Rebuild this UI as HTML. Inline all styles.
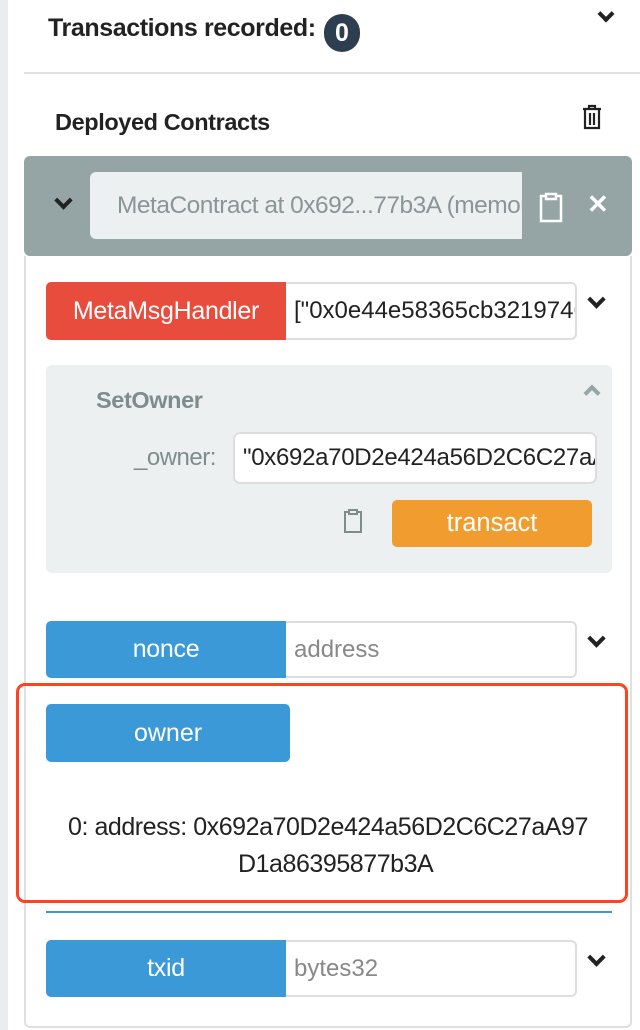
<!DOCTYPE html>
<html><head><meta charset="utf-8"><style>
*{box-sizing:border-box;margin:0;padding:0}
body{width:640px;height:1030px;position:relative;background:#fff;font-family:"Liberation Sans",sans-serif;overflow:hidden;color:#222}
.a{position:absolute}
.btn{position:absolute;color:#fff;font-size:25px;display:flex;align-items:center;justify-content:center;border-radius:5px 0 0 5px;letter-spacing:-0.3px}
.inp{position:absolute;background:#fff;border:2px solid #ddd;border-left:none;border-radius:0 6px 6px 0;font-size:24px;display:flex;align-items:center;padding-left:8px;overflow:hidden;white-space:nowrap}
.chev{position:absolute;width:13px;height:13px;border-right:4px solid #222;border-bottom:4px solid #222;transform:rotate(45deg)}
</style></head><body>
<div class="a" style="left:0;top:0;width:8px;height:1030px;background:#e9edee"></div>
<div class="a" style="left:48px;top:14px;font-size:25px;font-weight:bold;letter-spacing:-0.4px">Transactions recorded:</div>
<div class="a" style="left:324px;top:14px;width:36px;height:38px;border-radius:19px;background:#2c3e50;color:#fff;font-weight:bold;font-size:25px;text-align:center;line-height:38px">0</div>
<div class="chev" style="left:600px;top:8px;width:12px;height:12px"></div>
<div class="a" style="left:24px;top:72px;width:616px;height:2px;background:#e0e0e0"></div>
<div class="a" style="left:55px;top:109px;font-size:23.5px;font-weight:bold;letter-spacing:-0.4px">Deployed Contracts</div>
<svg class="a" style="left:581px;top:104px" width="22" height="26" viewBox="0 0 22 26"><path d="M2 5h18M8 5V2h6v3M4 5v19h14V5M9 9v12M13 9v12" fill="none" stroke="#222" stroke-width="2.2"/></svg>
<div class="a" style="left:24px;top:156px;width:608px;height:100px;background:#95a5a6;border-radius:6px"></div>
<div class="chev" style="left:57px;top:194px;width:13px;height:13px"></div>
<div class="a" style="left:90px;top:172px;width:432px;height:67px;background:#ecf0f1;border-radius:6px 0 0 6px;font-size:24.5px;color:#8a9597;line-height:67px;padding-left:27px;white-space:nowrap;overflow:hidden;letter-spacing:-0.5px">MetaContract at 0x692...77b3A (memory)</div>
<svg class="a" style="left:538px;top:191px" width="26" height="32" viewBox="0 0 26 32"><path d="M8 5H3v25h20V5h-5M8 3h10v5H8z" fill="none" stroke="#fff" stroke-width="2.5"/></svg>
<div class="a" style="left:587px;top:189px;color:#fff;font-size:26px;font-weight:bold">✕</div>
<div class="a" style="left:24px;top:256px;width:608px;height:772px;border:2px solid #e0e0e0;border-top:none;border-radius:0 0 6px 6px"></div>
<div class="btn" style="left:46px;top:282px;width:240px;height:58px;background:#e74c3c">MetaMsgHandler</div>
<div class="inp" style="left:286px;top:282px;width:291px;height:58px">["0x0e44e58365cb32197468</div>
<div class="chev" style="left:590px;top:293px"></div>
<div class="a" style="left:46px;top:365px;width:566px;height:208px;background:#ecf0f1;border-radius:6px"></div>
<div class="a" style="left:96px;top:387px;font-size:23.5px;font-weight:bold;color:#7f8c8d;letter-spacing:-0.4px">SetOwner</div>
<div class="chev" style="left:586px;top:387px;width:12px;height:12px;border-color:#95a5a6;transform:rotate(225deg)"></div>
<div class="a" style="left:134px;top:444px;font-size:24px;color:#7f8c8d;letter-spacing:-0.5px">_owner:</div>
<div class="a" style="left:233px;top:432px;width:364px;height:52px;background:#fff;border:2px solid #ddd;border-radius:7px;font-size:24px;line-height:48px;padding-left:8px;white-space:nowrap;overflow:hidden;letter-spacing:-0.3px">"0x692a70D2e424a56D2C6C27aA97</div>
<svg class="a" style="left:343px;top:508px" width="20" height="26" viewBox="0 0 20 26"><path d="M6 4H2v20h16V4h-4M6 2h8v4H6z" fill="none" stroke="#7f8c8d" stroke-width="2"/></svg>
<div class="a" style="left:392px;top:500px;width:200px;height:47px;background:#f19c2f;border-radius:5px;color:#fff;font-size:25.5px;text-align:center;line-height:47px">transact</div>
<div class="btn" style="left:46px;top:621px;width:240px;height:57px;background:#3c99d8">nonce</div>
<div class="inp" style="left:286px;top:621px;width:291px;height:57px;color:#888">address</div>
<div class="chev" style="left:590px;top:632px"></div>
<div class="a" style="left:16px;top:683px;width:612px;height:220px;border:3px solid #ff4322;border-radius:9px"></div>
<div class="a" style="left:46px;top:704px;width:244px;height:58px;background:#3c99d8;border-radius:5px;color:#fff;font-size:25px;text-align:center;line-height:58px">owner</div>
<div class="a" style="left:68px;top:813px;font-size:25px;white-space:nowrap;letter-spacing:-0.45px">0: address: 0x692a70D2e424a56D2C6C27aA97</div>
<div class="a" style="left:238px;top:850px;font-size:25px;letter-spacing:-0.45px">D1a86395877b3A</div>
<div class="a" style="left:46px;top:911px;width:566px;height:2px;background:#3c99d8"></div>
<div class="btn" style="left:46px;top:940px;width:240px;height:57px;background:#3c99d8">txid</div>
<div class="inp" style="left:286px;top:940px;width:291px;height:57px;color:#888">bytes32</div>
<div class="chev" style="left:590px;top:951px"></div>
</body></html>
